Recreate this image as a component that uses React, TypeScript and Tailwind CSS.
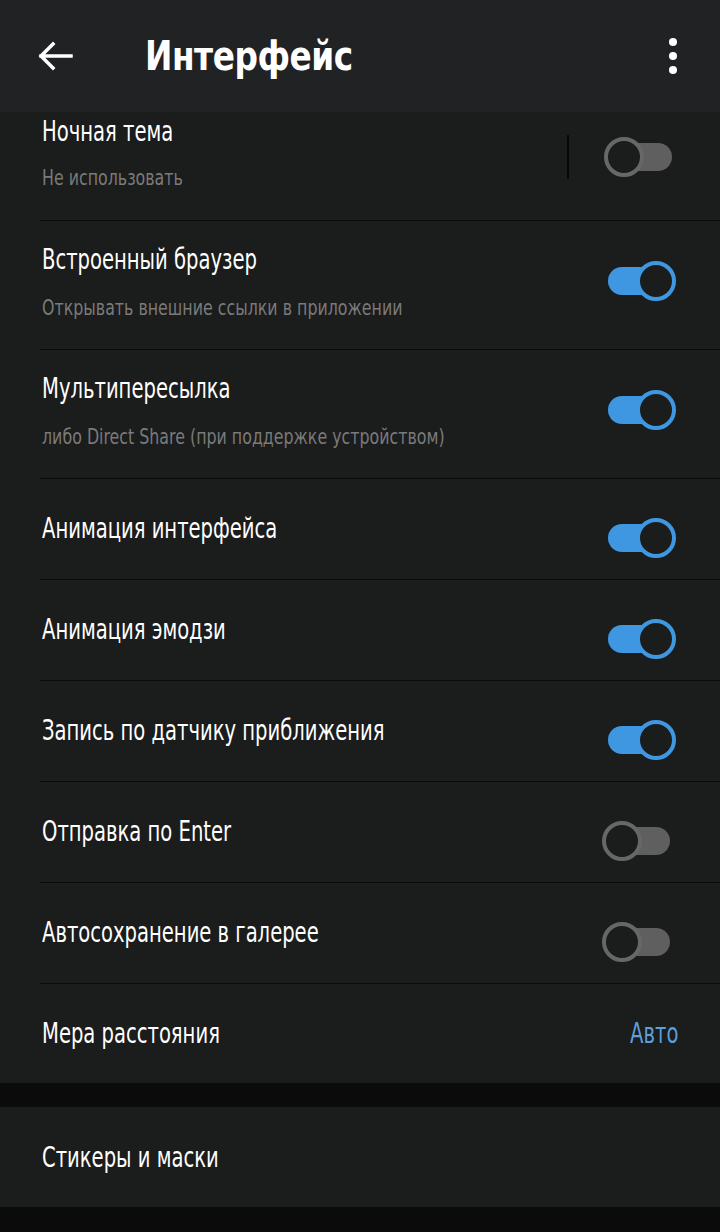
import React from 'react';

type Row = { title: string; subtitle?: string; on?: boolean };

const rows: Row[] = [
  { title: 'Встроенный браузер', subtitle: 'Открывать внешние ссылки в приложении', on: true },
  { title: 'Мультипересылка', subtitle: 'либо Direct Share (при поддержке устройством)', on: true },
  { title: 'Анимация интерфейса', on: true },
  { title: 'Анимация эмодзи', on: true },
  { title: 'Запись по датчику приближения', on: true },
  { title: 'Отправка по Enter', on: false },
  { title: 'Автосохранение в галерее', on: false },
];

const Toggle: React.FC<{ on: boolean }> = ({ on }) =>
  on ? (
    <div className="relative w-[68px] h-[40px] mr-[44px]">
      <div className="absolute left-0 top-[6px] w-[52px] h-[28px] rounded-full bg-[#3f97e2]" />
      <div className="absolute right-0 top-0 w-[40px] h-[40px] rounded-full border-[4px] border-[#3f97e2] bg-[#1b1c1c]" />
    </div>
  ) : (
    <div className="relative w-[68px] h-[40px] mr-[50px]">
      <div className="absolute right-0 top-[6px] w-[52px] h-[28px] rounded-full bg-[#5f5f5f]" />
      <div className="absolute left-0 top-0 w-[40px] h-[40px] rounded-full border-[4px] border-[#676767] bg-[#1b1c1c]" />
    </div>
  );

const Title: React.FC<{ children: React.ReactNode }> = ({ children }) => (
  <div className="text-[29px] leading-[34px] whitespace-nowrap">
    <span className="inline-block origin-left scale-x-[0.75]">{children}</span>
  </div>
);

const Sub: React.FC<{ children: React.ReactNode }> = ({ children }) => (
  <div className="text-[22px] leading-[26px] text-[#7a7a7a] whitespace-nowrap">
    <span className="inline-block origin-left scale-x-[0.8]">{children}</span>
  </div>
);

export default function App() {
  const font = { fontFamily: '"DejaVu Sans Condensed", "DejaVu Sans", sans-serif' };
  return (
    <div className="w-[720px] h-[1232px] bg-[#0b0b0b] overflow-hidden text-white" style={font}>
      <div className="h-[112px] bg-[#212224] flex items-center">
        <svg width="36" height="30" viewBox="0 0 36 30" className="ml-[37px]">
          <path d="M34 15H4M16 3L4 15l12 12" stroke="#fff" strokeWidth="3.5" fill="none" strokeLinecap="square" />
        </svg>
        <h1 className="ml-[72px] text-[40px] font-bold tracking-[-0.5px] whitespace-nowrap">
          <span className="inline-block origin-left scale-x-[0.91]">Интерфейс</span>
        </h1>
        <div className="ml-auto mr-[43px] flex flex-col gap-[6px]">
          <span className="w-[8px] h-[8px] rounded-full bg-white" />
          <span className="w-[8px] h-[8px] rounded-full bg-white" />
          <span className="w-[8px] h-[8px] rounded-full bg-white" />
        </div>
      </div>

      <div className="bg-[#1b1c1c]">
        <div className="h-[108px] flex items-start">
          <div className="pl-[42px] pt-[2px] flex-1 min-w-0">
            <Title>Ночная тема</Title>
            <div className="mt-[17px]">
              <Sub>Не использовать</Sub>
            </div>
          </div>
          <div className="w-[2px] h-[44px] bg-[#070707] mt-[23px] mr-[35px]" />
          <div className="mt-[25px] -mr-[2px]">
            <Toggle on={false} />
          </div>
        </div>

        {rows.map((r) => (
          <div key={r.title} className="ml-[40px] border-t-[1px] border-[#0a0a0a]">
            <div className={`${r.subtitle ? 'h-[128px]' : 'h-[100px]'} flex items-start`}>
              <div className={`flex-1 min-w-0 pl-[2px] ${r.subtitle ? 'pt-[21px]' : 'pt-[32px]'}`}>
                <Title>{r.title}</Title>
                {r.subtitle && (
                  <div className="mt-[19px]">
                    <Sub>{r.subtitle}</Sub>
                  </div>
                )}
              </div>
              <div className={r.subtitle ? 'mt-[40px]' : 'mt-[39px]'}>
                <Toggle on={!!r.on} />
              </div>
            </div>
          </div>
        ))}

        <div className="ml-[40px] border-t-[1px] border-[#0a0a0a] h-[100px] flex items-start pt-[32px]">
          <div className="flex-1 min-w-0 pl-[2px]">
            <Title>Мера расстояния</Title>
          </div>
          <div className="mr-[42px] text-[29px] leading-[34px] text-[#5c9fdc] whitespace-nowrap">
            <span className="inline-block origin-right scale-x-[0.75]">Авто</span>
          </div>
        </div>
      </div>

      <div className="h-[24px]" />

      <div className="bg-[#1b1c1c] h-[100px] flex items-start pt-[33px] pl-[42px]">
        <Title>Стикеры и маски</Title>
      </div>
    </div>
  );
}
